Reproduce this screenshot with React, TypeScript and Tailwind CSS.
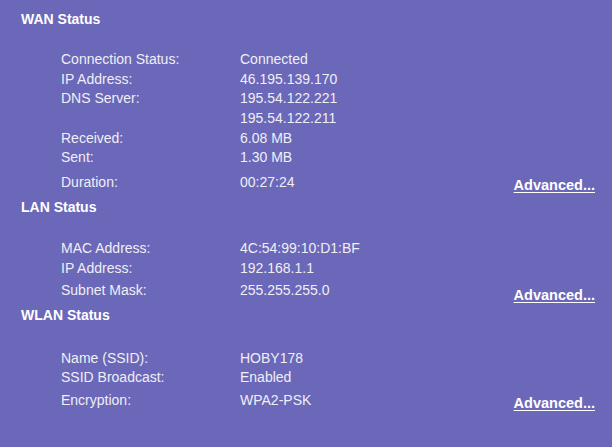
const SECTIONS = [
  {
    title: "WAN Status",
    rows: [
      ["Connection Status:", "Connected"],
      ["IP Address:", "46.195.139.170"],
      ["DNS Server:", "195.54.122.221"],
      ["", "195.54.122.211"],
      ["Received:", "6.08 MB"],
      ["Sent:", "1.30 MB"],
    ],
    last: ["Duration:", "00:27:24"],
    top: "mt-[9px]",
    gap: "mt-[21px]",
    lastGap: "mt-[5px]",
    link: "top-[4px]",
  },
  {
    title: "LAN Status",
    rows: [
      ["MAC Address:", "4C:54:99:10:D1:BF"],
      ["IP Address:", "192.168.1.1"],
    ],
    last: ["Subnet Mask:", "255.255.255.0"],
    top: "mt-[5.5px]",
    gap: "mt-[21px]",
    lastGap: "mt-[3px]",
    link: "top-[5.5px]",
  },
  {
    title: "WLAN Status",
    rows: [
      ["Name (SSID):", "HOBY178"],
      ["SSID Broadcast:", "Enabled"],
    ],
    last: ["Encryption:", "WPA2-PSK"],
    top: "mt-[5.5px]",
    gap: "mt-[22.5px]",
    lastGap: "mt-[3px]",
    link: "top-[3.5px]",
  },
];

function Row({ label, value }: { label: string; value: string }) {
  return (
    <div className="flex h-[19.6px] items-center">
      <span className="w-[179px] shrink-0">{label}</span>
      <span>{value}</span>
    </div>
  );
}

export default function App() {
  return (
    <div
      className="h-[447px] w-[612px] overflow-hidden bg-[#6b67b9] pl-[21px] pr-[17px] text-[14px] text-[#efeff5]"
      style={{ fontFamily: '"Liberation Sans", Arial, sans-serif' }}
    >
      {SECTIONS.map((s) => (
        <section key={s.title} className={s.top}>
          <h2 className="flex h-[20px] items-center font-bold text-white">{s.title}</h2>
          <div className={`${s.gap} pl-[40px]`}>
            {s.rows.map(([label, value], i) => (
              <Row key={i} label={label} value={value} />
            ))}
            <div className={`${s.lastGap} flex h-[19.6px] items-center`}>
              <span className="w-[179px] shrink-0">{s.last[0]}</span>
              <span className="flex-1">{s.last[1]}</span>
              <a
                href="#"
                className={`relative ${s.link} text-[14.5px] font-bold text-white underline underline-offset-2`}
              >
                Advanced...
              </a>
            </div>
          </div>
        </section>
      ))}
    </div>
  );
}
